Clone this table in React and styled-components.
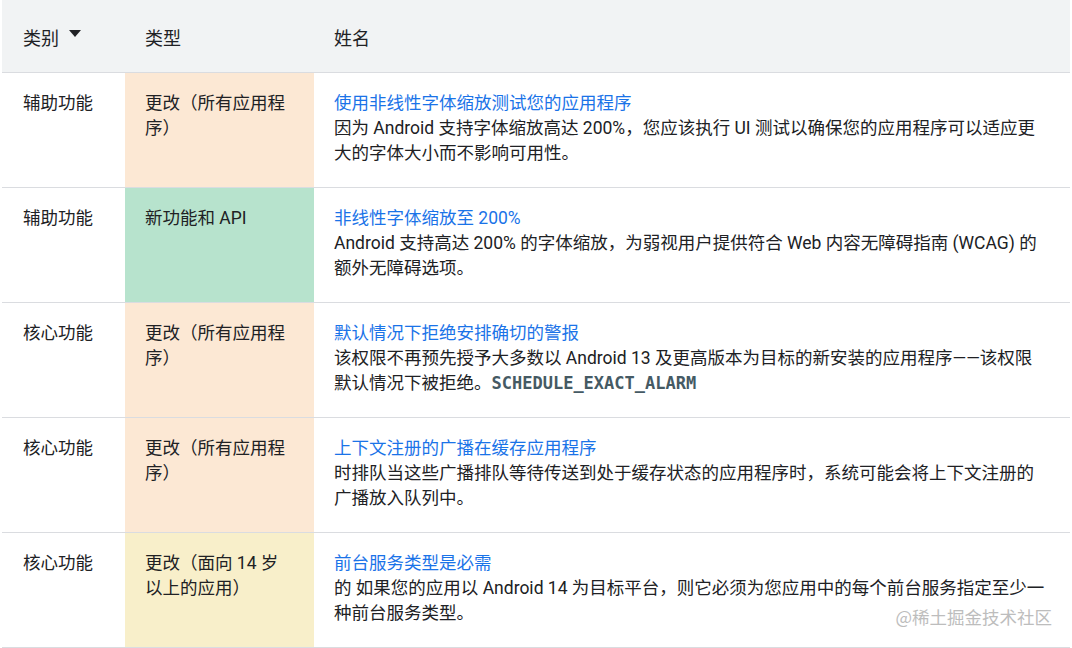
import React from 'react'
import styled, { createGlobalStyle } from 'styled-components';

const GlobalStyle = createGlobalStyle`
  html, body {
    margin:0;
    padding:0;
    background:#ffffff;
  }
  body {
    font-family: Roboto, "Noto Sans CJK SC", sans-serif;
    color:#202124;
  }
`;

const Page = styled.div`
  position:relative;
  width:1072px;
  height:648px;
  overflow:hidden;
  padding-left:2px;
  box-sizing:border-box;
`;

const Table = styled.table`
  width:1068px;
  border-collapse:collapse;
  table-layout:fixed;
  font-size:17.5px;
  line-height:25px;
`;

const HeadRow = styled.tr`
  background:#f1f3f4;
  border-bottom:1px solid #dadce0;
`;

const Th = styled.th`
  text-align:left;
  font-weight:400;
  font-size:18px;
  padding:26px 20px 21px ${p => (p.$first ? '21px' : '20px')};
  vertical-align:top;
  white-space:nowrap;
`;

const SortCaret = styled.span`
  display:inline-block;
  width:0;
  height:0;
  margin-left:10px;
  vertical-align:8px;
  border-left:6.5px solid transparent;
  border-right:6.5px solid transparent;
  border-top:7px solid #202124;
`;

const Row = styled.tr`
  border-bottom:1px solid #dadce0;
`;

const Td = styled.td`
  vertical-align:top;
  padding:18px 20px 21px ${p => (p.$first ? '21px' : '20px')};
  background:${p => p.$tone || 'transparent'};
`;

const Title = styled.a`
  display:block;
  color:#1a73e8;
  text-decoration:none;
`;

const Code = styled.code`
  font-family:"DejaVu Sans Mono", "Liberation Mono", monospace;
  font-size:17px;
  font-weight:700;
  color:#455a64;
`;

const Watermark = styled.div`
  position:absolute;
  right:20px;
  bottom:19px;
  font-family:"Noto Sans CJK SC", sans-serif;
  font-size:17.5px;
  line-height:25px;
  color:#bdbdbd;
`;

const tones = {
  change: '#fce8d4',
  feature: '#b7e3cd',
  target: '#f8efca',
};

const rows = [
  {
    category: '辅助功能',
    type: '更改（所有应用程序）',
    tone: tones.change,
    title: '使用非线性字体缩放测试您的应用程序',
    body: <>因为 Android 支持字体缩放高达 200%，您应该执行 UI 测试以确保您的应用程序可以适应更大的字体大小而不影响可用性。</>,
  },
  {
    category: '辅助功能',
    type: '新功能和 API',
    tone: tones.feature,
    title: '非线性字体缩放至 200%',
    body: <>Android 支持高达 200% 的字体缩放，为弱视用户提供符合 Web 内容无障碍指南 (WCAG) 的<br />额外无障碍选项。</>,
  },
  {
    category: '核心功能',
    type: '更改（所有应用程序）',
    tone: tones.change,
    title: '默认情况下拒绝安排确切的警报',
    body: <>该权限不再预先授予大多数以 Android 13 及更高版本为目标的新安装的应用程序——该权限<br />默认情况下被拒绝。<Code>SCHEDULE_EXACT_ALARM</Code></>,
  },
  {
    category: '核心功能',
    type: '更改（所有应用程序）',
    tone: tones.change,
    title: '上下文注册的广播在缓存应用程序',
    body: <>时排队当这些广播排队等待传送到处于缓存状态的应用程序时，系统可能会将上下文注册的广播放入队列中。</>,
  },
  {
    category: '核心功能',
    type: '更改（面向 14 岁以上的应用）',
    tone: tones.target,
    title: '前台服务类型是必需',
    body: <>的 如果您的应用以 Android 14 为目标平台，则它必须为您应用中的每个前台服务指定至少一种前台服务类型。</>,
  },
];

const App = () => {
  return (
    <Page>
      <GlobalStyle />
      <Table>
        <colgroup>
          <col style={{ width: '123px' }} />
          <col style={{ width: '189px' }} />
          <col />
        </colgroup>
        <thead>
          <HeadRow>
            <Th $first>类别<SortCaret /></Th>
            <Th>类型</Th>
            <Th>姓名</Th>
          </HeadRow>
        </thead>
        <tbody>
          {rows.map((r, i) => (
            <Row key={i}>
              <Td $first>{r.category}</Td>
              <Td $tone={r.tone}>{r.type}</Td>
              <Td>
                <Title href="#">{r.title}</Title>
                {r.body}
              </Td>
            </Row>
          ))}
        </tbody>
      </Table>
      <Watermark>@稀土掘金技术社区</Watermark>
    </Page>
  )
}

export default App;
